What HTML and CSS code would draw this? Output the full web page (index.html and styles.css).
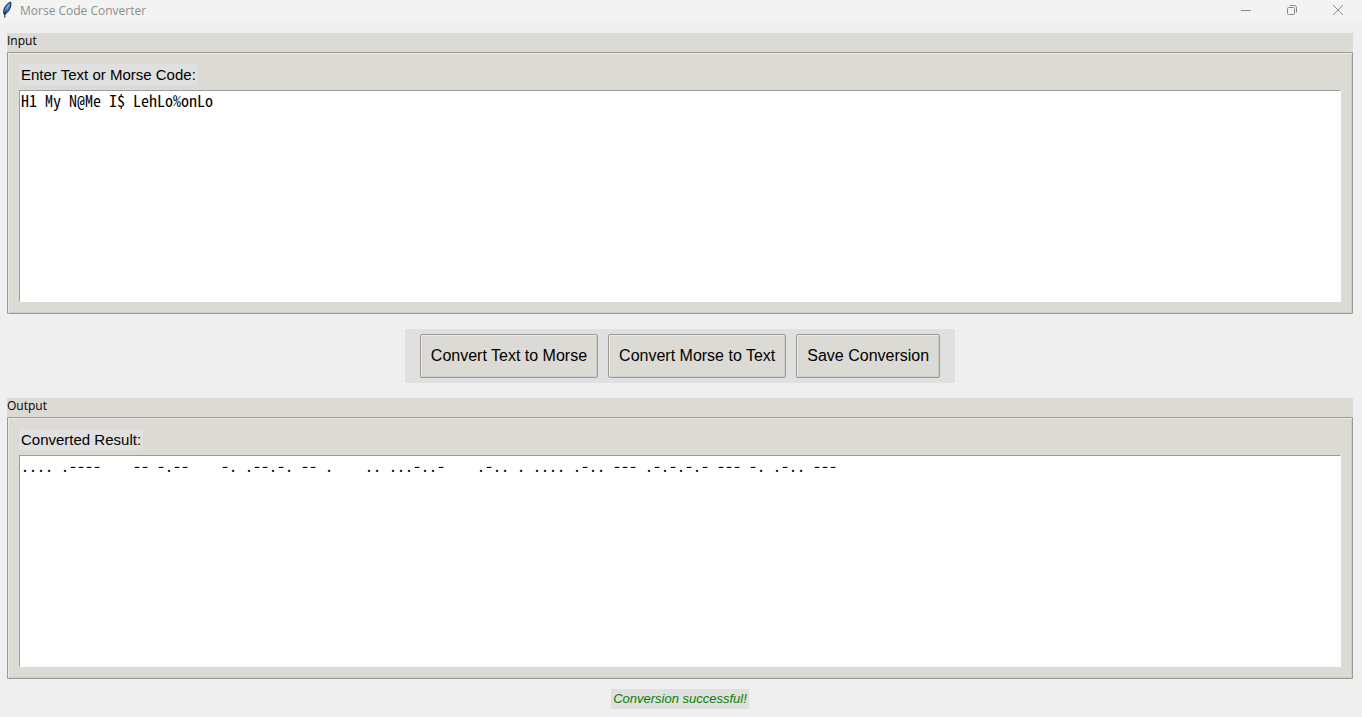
FILE: index.html
```html
<!DOCTYPE html>
<html lang="en">
<head>
<meta charset="utf-8">
<title>Morse Code Converter</title>
<link rel="stylesheet" href="styles.css">
</head>
<body>
<header class="titlebar">
  <svg class="app-icon" viewBox="0 0 14 18" aria-hidden="true">
    <path d="M10.6 1.2C8 2 5.2 4.6 4.1 8.2C3.5 10.2 3.5 12.2 4.2 13.4C7 12.4 9.2 9.6 10.2 6.6C10.9 4.6 11.1 2.6 10.6 1.2Z" fill="#3f86d8" stroke="#10151c" stroke-width="1"/>
    <path d="M9.4 3.4C7.6 5.4 6.2 8 5.4 11" fill="none" stroke="#8fc3f5" stroke-width="1"/>
    <path d="M6.6 8.6C5.4 11 4.6 13 4.8 16.6" fill="none" stroke="#10151c" stroke-width="1"/>
  </svg>
  <h1 class="title">Morse Code Converter</h1>
  <div class="window-controls">
    <button class="window-button" type="button" aria-label="Minimize"><svg class="window-icon" viewBox="0 0 12 12"><path d="M1 6.5H11"/></svg></button>
    <button class="window-button" type="button" aria-label="Restore"><svg class="window-icon" viewBox="0 0 12 12"><rect x="1.5" y="3.5" width="7" height="7" rx="1"/><path d="M3.5 1.5H8.5Q10.5 1.5 10.5 3.5V8.5"/></svg></button>
    <button class="window-button" type="button" aria-label="Close"><svg class="window-icon" viewBox="0 0 12 12"><path d="M1 1L11 11M11 1L1 11"/></svg></button>
  </div>
</header>
<main class="app">
  <section class="group">
    <h2 class="group-title">Input</h2>
    <div class="group-box">
      <label class="field-label" for="source">Enter Text or Morse Code:</label>
      <textarea class="field" id="source" spellcheck="false">H1 My N@Me I$ LehLo%onLo</textarea>
    </div>
  </section>
  <div class="actions">
    <button class="action" type="button">Convert Text to Morse</button>
    <button class="action" type="button">Convert Morse to Text</button>
    <button class="action" type="button">Save Conversion</button>
  </div>
  <section class="group">
    <h2 class="group-title">Output</h2>
    <div class="group-box">
      <label class="field-label" for="result">Converted Result:</label>
      <textarea class="field" id="result" spellcheck="false">.... .----    -- -.--    -. .--.-. -- .    .. ...-..-    .-.. . .... .-.. --- .-.-.-.- --- -. .-.. ---</textarea>
    </div>
  </section>
  <p class="status" role="status">Conversion successful!</p>
</main>
</body>
</html>
```
FILE: styles.css
```css
* {
  box-sizing: border-box;
}

body {
  display: flex;
  flex-direction: column;
  min-height: 100vh;
  margin: 0;
  background: #efefef;
  color: #000;
  font-family: "Liberation Sans", Arial, sans-serif;
}

.titlebar {
  display: flex;
  align-items: flex-start;
  height: 23px;
  padding-top: 1px;
  background: #f3f3f3;
}

.app-icon {
  width: 14px;
  height: 18px;
  margin-right: 6px;
}

.title {
  margin: 0;
  color: #8e8e8e;
  font: 12px/20px "Open Sans", "Noto Sans", sans-serif;
}

.window-controls {
  display: flex;
  margin-left: auto;
  padding-right: 1px;
}

.window-button {
  display: flex;
  align-items: center;
  justify-content: center;
  width: 46px;
  height: 18px;
  padding: 0;
  border: 0;
  background: none;
}

.window-icon {
  width: 12px;
  height: 12px;
  fill: none;
  stroke: #8a8a8a;
}

.app {
  display: flex;
  flex: 1;
  flex-direction: column;
  gap: 15px;
  padding: 10px 9px 8px 7px;
}

.group {
  display: flex;
  flex: 1;
  flex-direction: column;
  background: #dcdad5;
}

.group-title {
  margin: 0;
  padding-bottom: 3px;
  font: 12px/16px "Open Sans", "Noto Sans", sans-serif;
}

.group-box {
  display: flex;
  flex: 1;
  flex-direction: column;
  align-items: flex-start;
  padding: 11px;
  border: 1px solid #9e9a91;
  border-radius: 1px;
  box-shadow: inset 1px 1px #eeebe7, inset -1px -1px #cfcdc8;
}

.field-label {
  margin-bottom: 5px;
  padding: 0 2px;
  background: #e0e0e0;
  font-size: 15px;
  line-height: 21px;
}

.field {
  flex: 1;
  width: 100%;
  padding: 1px;
  border: 1px solid #fff;
  border-top-color: #9e9a9a;
  border-left-color: #9e9a9a;
  border-radius: 0;
  outline: 0;
  background: #fff;
  color: #000;
  font: 16px/17px "Noto Sans Mono CJK SC", "DejaVu Sans Mono", monospace;
  resize: none;
}

.actions {
  display: flex;
  align-self: center;
  gap: 10px;
  padding: 5px 15px;
  background: #e0e0e0;
}

.action {
  height: 44px;
  padding: 0 10px;
  border: 1px solid #9e9a91;
  border-radius: 2px;
  background: #dcdad5;
  box-shadow: inset 1px 1px #eeebe7, inset -1px -1px #cfcdc8;
  color: #000;
  font: 16px "Liberation Sans", Arial, sans-serif;
}

.status {
  align-self: center;
  margin: -5px 0 0;
  padding: 0 2px;
  background: #e0e0e0;
  color: #008000;
  font-size: 13px;
  font-style: italic;
  line-height: 20px;
}
```
